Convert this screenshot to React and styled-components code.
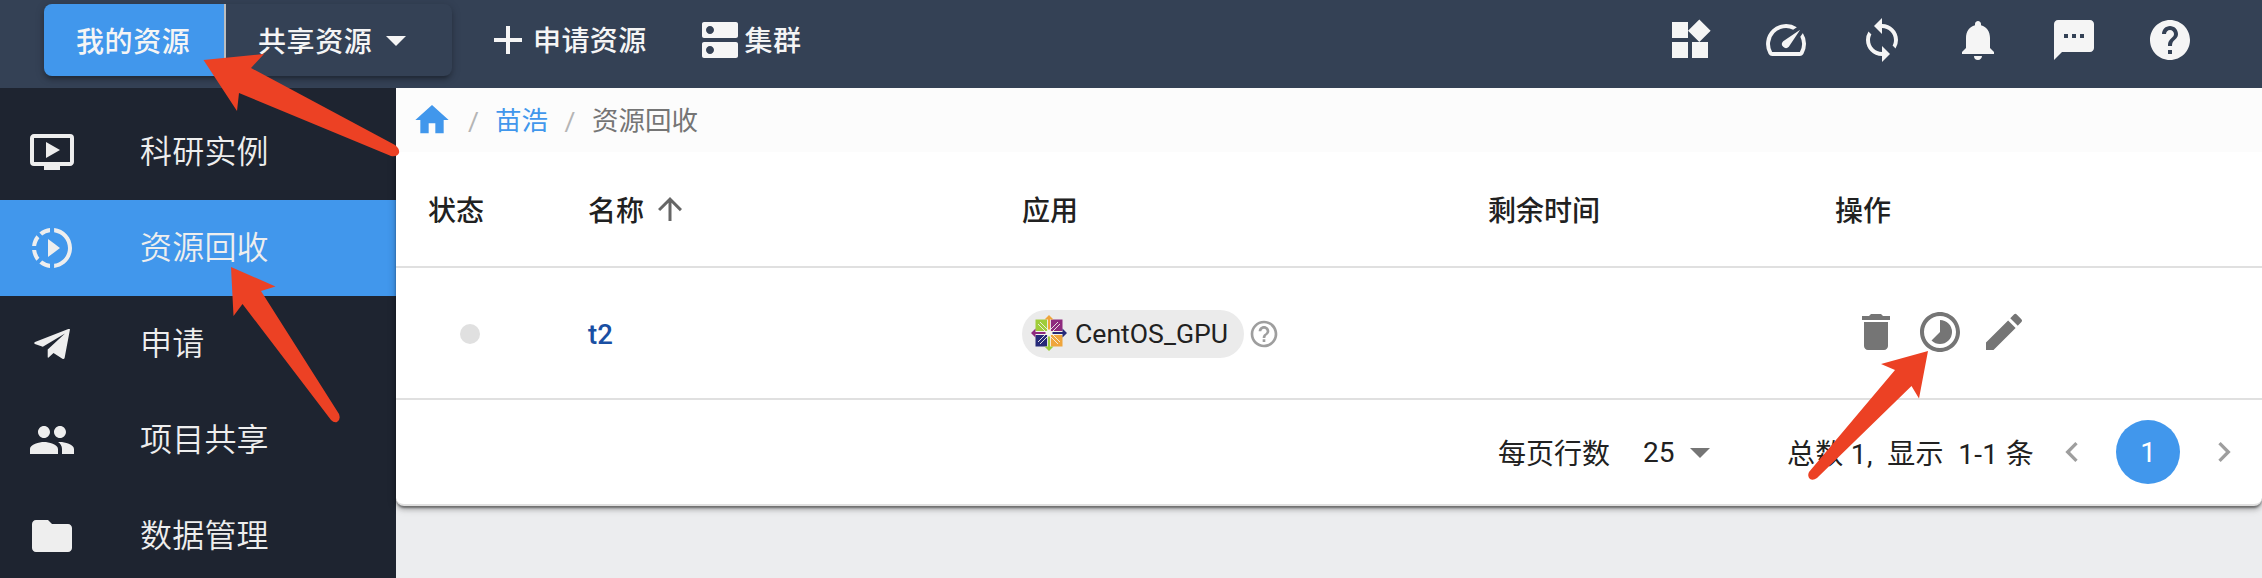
import React from "react";
import styled, { createGlobalStyle } from "styled-components";
import {
  MdWidgets, MdSpeed, MdLoop, MdNotifications, MdSms, MdHelp,
  MdOndemandVideo, MdSlowMotionVideo, MdPeople, MdFolder, MdHome,
  MdAdd, MdDns, MdArrowDropDown, MdArrowUpward, MdHelpOutline,
  MdDelete, MdTimelapse, MdEdit, MdChevronLeft, MdChevronRight,
} from "react-icons/md";

const blue = "#4197ec";
const elevation = `0 2px 10px rgba(0, 0, 0, 0.2), 0 4px 4px rgba(0, 0, 0, 0.14),
    0 6px 2px -4px rgba(0, 0, 0, 0.12)`;

const Global = createGlobalStyle`
  * { box-sizing: border-box; }
  body {
    margin: 0;
    font-family: Roboto, "Noto Sans CJK SC", sans-serif;
    font-size: 28px;
    color: #212121;
    background: #ecedef;
    overflow: hidden;
  }
  svg { flex: none; display: block; }
`;

const Page = styled.div`
  position: relative;
  display: flex;
  flex-direction: column;
  height: 578px;
  overflow: hidden;
`;

const TopBar = styled.header`
  display: flex;
  align-items: flex-start;
  flex: none;
  height: 88px;
  padding: 4px 68px 0 44px;
  background: #344155;
  color: #f5f5f5;
`;

const ButtonGroup = styled.div`
  display: flex;
  width: 408px;
  height: 72px;
  border-radius: 8px;
  box-shadow: ${elevation};
`;

const GroupButton = styled.div`
  display: flex;
  align-items: center;
  width: ${(p) => p.$width}px;
  padding-left: 32px;
  padding-bottom: 1px;
  background: ${(p) => (p.$active ? blue : "transparent")};
  border-radius: ${(p) => (p.$active ? "8px 0 0 8px" : "0 8px 8px 0")};
  border-right: ${(p) => (p.$active ? "2px solid #bdbdbd" : "none")};
  font-weight: 500;
  letter-spacing: 0.6px;
`;

const TopLink = styled.div`
  display: flex;
  align-items: center;
  gap: 1px;
  height: 72px;
  margin-left: ${(p) => p.$gap}px;
  font-weight: 500;
  letter-spacing: 0.4px;
`;

const TopLabel = styled.span`
  padding-bottom: 2px;
`;

const TopIcons = styled.div`
  display: flex;
  align-items: center;
  gap: 48px;
  height: 72px;
  margin-left: auto;
`;

const Body = styled.div`
  display: flex;
  flex: 1;
`;

const Sidebar = styled.nav`
  width: 396px;
  flex: none;
  padding-top: 16px;
  background: #1e2430;
`;

const NavItem = styled.div`
  display: flex;
  align-items: center;
  gap: 64px;
  height: 96px;
  padding-left: 28px;
  font-size: 32px;
  font-weight: 350;
  letter-spacing: 0.2px;
  color: #eeeeee;
  background: ${(p) => (p.$active ? blue : "transparent")};
`;

const NavLabel = styled.span`
  padding-bottom: 7px;
`;

const Main = styled.main`
  flex: 1;
  min-width: 0;
`;

const Crumbs = styled.div`
  position: relative;
  z-index: 1;
  display: flex;
  align-items: center;
  height: 64px;
  padding: 0 0 0 16px;
  background: #fcfcfc;
  font-size: 26.5px;
`;

const Crumb = styled.span`
  padding-bottom: 3px;
  color: ${(p) => (p.$link ? blue : "#757575")};
  white-space: nowrap;
`;

const Slash = styled.span`
  width: ${(p) => p.$width}px;
  text-align: center;
  color: #b5b5b5;
`;

const Card = styled.section`
  height: 354px;
  background: #fff;
  border-bottom: 2px solid #e0e0e0;
  border-radius: 0 0 8px 8px;
  box-shadow: 0 2px 2px rgba(0, 0, 0, 0.3), ${elevation};
`;

const Row = styled.div`
  display: grid;
  grid-template-columns: 160px 434px 466px 347px 1fr;
  align-items: center;
  height: ${(p) => p.$height}px;
  padding-top: ${(p) => p.$nudge || 0}px;
  padding-left: 32px;
  border-bottom: 2px solid #e0e0e0;
`;

const HeadCell = styled.div`
  display: flex;
  align-items: center;
  gap: 8px;
  font-weight: 500;
  svg { color: #666; }
`;

const Cell = styled.div`
  display: flex;
  align-items: center;
`;

const Dot = styled.span`
  width: 20px;
  height: 20px;
  margin-left: 32px;
  border-radius: 50%;
  background: #e0e0e0;
`;

const NameLink = styled.span`
  font-weight: 500;
  font-size: 27.5px;
  color: #1a4fa3;
`;

const Chip = styled.span`
  display: flex;
  align-items: center;
  width: 222px;
  height: 48px;
  margin-right: 4px;
  padding: 0 0 2px 9px;
  gap: 8px;
  border-radius: 24px;
  background: #ebebeb;
  font-size: 26.6px;
`;

const Actions = styled(Cell)`
  gap: 16px;
  padding-left: 17px;
  padding-bottom: 4px;
  color: #757575;
`;

const Pager = styled.footer`
  display: flex;
  align-items: center;
  height: 104px;
  padding-left: 1102px;
  white-space: pre;
  svg { color: #9e9e9e; }
`;

const PageSize = styled.span`
  display: flex;
  align-items: center;
  gap: 1px;
  width: 144px;
  margin-left: 33px;
  svg { color: #757575; }
`;

const Summary = styled.span`
  width: 265px;
  letter-spacing: 0.3px;
`;

const CurrentPage = styled.span`
  display: flex;
  align-items: center;
  justify-content: center;
  width: 64px;
  height: 64px;
  margin: 0 24px;
  border-radius: 50%;
  background: ${blue};
  color: #fff;
`;

const Annotations = styled.svg`
  position: absolute;
  left: 0;
  top: 0;
  z-index: 2;
  pointer-events: none;
`;

const PaperPlane = () => (
  <svg width="48" height="48" viewBox="0 0 48 48" fill="currentColor">
    <path d="M42 9.3 L36.6 38 Q36 39.5 34.4 38.7 L25.5 33 L20.6 37.6 Q19.7 38 19.7 37 V29.5 L37 13.6 L14.8 26.8 L6.9 24 Q5.2 22.9 7 22 L40.3 9.1 Q41.8 8.6 42 9.3 Z" />
  </svg>
);

const quarter = (color) => (
  <>
    <rect x="4.5" y="4.5" width="13" height="13" fill={color} />
    <path d="M9 7L17.5 15.5M7 9L15.5 17.5" stroke="#f2f2ea" strokeWidth="0.9" fill="none" />
  </>
);

const CentosLogo = () => (
  <svg width="36" height="36" viewBox="0 0 36 36">
    <g>{quarter("#9fcd3a")}</g>
    <g transform="rotate(90 18 18)">{quarter("#8e2a7e")}</g>
    <g transform="rotate(180 18 18)">{quarter("#efa53b")}</g>
    <g transform="rotate(270 18 18)">{quarter("#262a78")}</g>
    <path d="M18 4V32M4 18H32" stroke="#f2f2ea" strokeWidth="3.8" />
    <path d="M18 0l4.5 4.5h-3.5v10h-2v-10h-3.5z" fill="#efa53b" />
    <path d="M36 18l-4.5 4.5v-3.5h-10v-2h10v-3.5z" fill="#262a78" />
    <path d="M18 36l-4.5-4.5h3.5v-10h2v10h3.5z" fill="#9fcd3a" />
    <path d="M0 18l4.5-4.5v3.5h10v2h-10v3.5z" fill="#8e2a7e" />
  </svg>
);

const navItems = [
  { label: "科研实例", Icon: MdOndemandVideo },
  { label: "资源回收", Icon: MdSlowMotionVideo, active: true },
  { label: "申请", Icon: PaperPlane },
  { label: "项目共享", Icon: MdPeople },
  { label: "数据管理", Icon: MdFolder },
];

const topIcons = [MdWidgets, MdSpeed, MdLoop, MdNotifications, MdSms, MdHelp];

export default function App() {
  return (
    <Page>
      <Global />
      <TopBar>
        <ButtonGroup>
          <GroupButton $active $width={182}>我的资源</GroupButton>
          <GroupButton $width={226}>共享资源<MdArrowDropDown size={48} /></GroupButton>
        </ButtonGroup>
        <TopLink $gap={32}><MdAdd size={48} /><TopLabel>申请资源</TopLabel></TopLink>
        <TopLink $gap={49}><MdDns size={48} /><TopLabel>集群</TopLabel></TopLink>
        <TopIcons>
          {topIcons.map((Icon, i) => <Icon key={i} size={48} />)}
        </TopIcons>
      </TopBar>
      <Body>
        <Sidebar>
          {navItems.map(({ label, Icon, active }) => (
            <NavItem key={label} $active={active}>
              <Icon size={48} />
              <NavLabel>{label}</NavLabel>
            </NavItem>
          ))}
        </Sidebar>
        <Main>
          <Crumbs>
            <MdHome size={40} color={blue} />
            <Slash $width={43}>/</Slash>
            <Crumb $link>苗浩</Crumb>
            <Slash $width={44}>/</Slash>
            <Crumb>资源回收</Crumb>
          </Crumbs>
          <Card>
            <Row $height={116}>
              <HeadCell>状态</HeadCell>
              <HeadCell>名称<MdArrowUpward size={36} /></HeadCell>
              <HeadCell>应用</HeadCell>
              <HeadCell>剩余时间</HeadCell>
              <HeadCell>操作</HeadCell>
            </Row>
            <Row $height={132} $nudge={2}>
              <Cell><Dot /></Cell>
              <Cell><NameLink>t2</NameLink></Cell>
              <Cell>
                <Chip><CentosLogo />CentOS_GPU</Chip>
                <MdHelpOutline size={32} color="#9e9e9e" />
              </Cell>
              <Cell />
              <Actions>
                <MdDelete size={48} />
                <MdTimelapse size={48} />
                <MdEdit size={48} />
              </Actions>
            </Row>
            <Pager>
              <span>每页行数</span>
              <PageSize>25<MdArrowDropDown size={48} /></PageSize>
              <Summary>总数 1,  显示  1-1 条</Summary>
              <MdChevronLeft size={40} />
              <CurrentPage>1</CurrentPage>
              <MdChevronRight size={40} />
            </Pager>
          </Card>
        </Main>
      </Body>
      <Annotations width="2262" height="578" viewBox="0 0 2262 578" fill="#ec4124">
        <path d="M203.5 60 L264 54 L251 68 L395 145 Q400 149 399 153 Q397 157 391 156 L239 93 L237 111 Z" />
        <path d="M231 267 L275.5 286.5 L261 291 L339 414 Q341 420 337 422 Q334 423 331 420 L242.5 304 L233.5 316 Z" />
        <path d="M1928 351 L1919 398.5 L1911.5 386 L1817 478 Q1813 481 1810 479 Q1807 476 1809 472 L1895 370 L1881 364 Z" />
      </Annotations>
    </Page>
  );
}
